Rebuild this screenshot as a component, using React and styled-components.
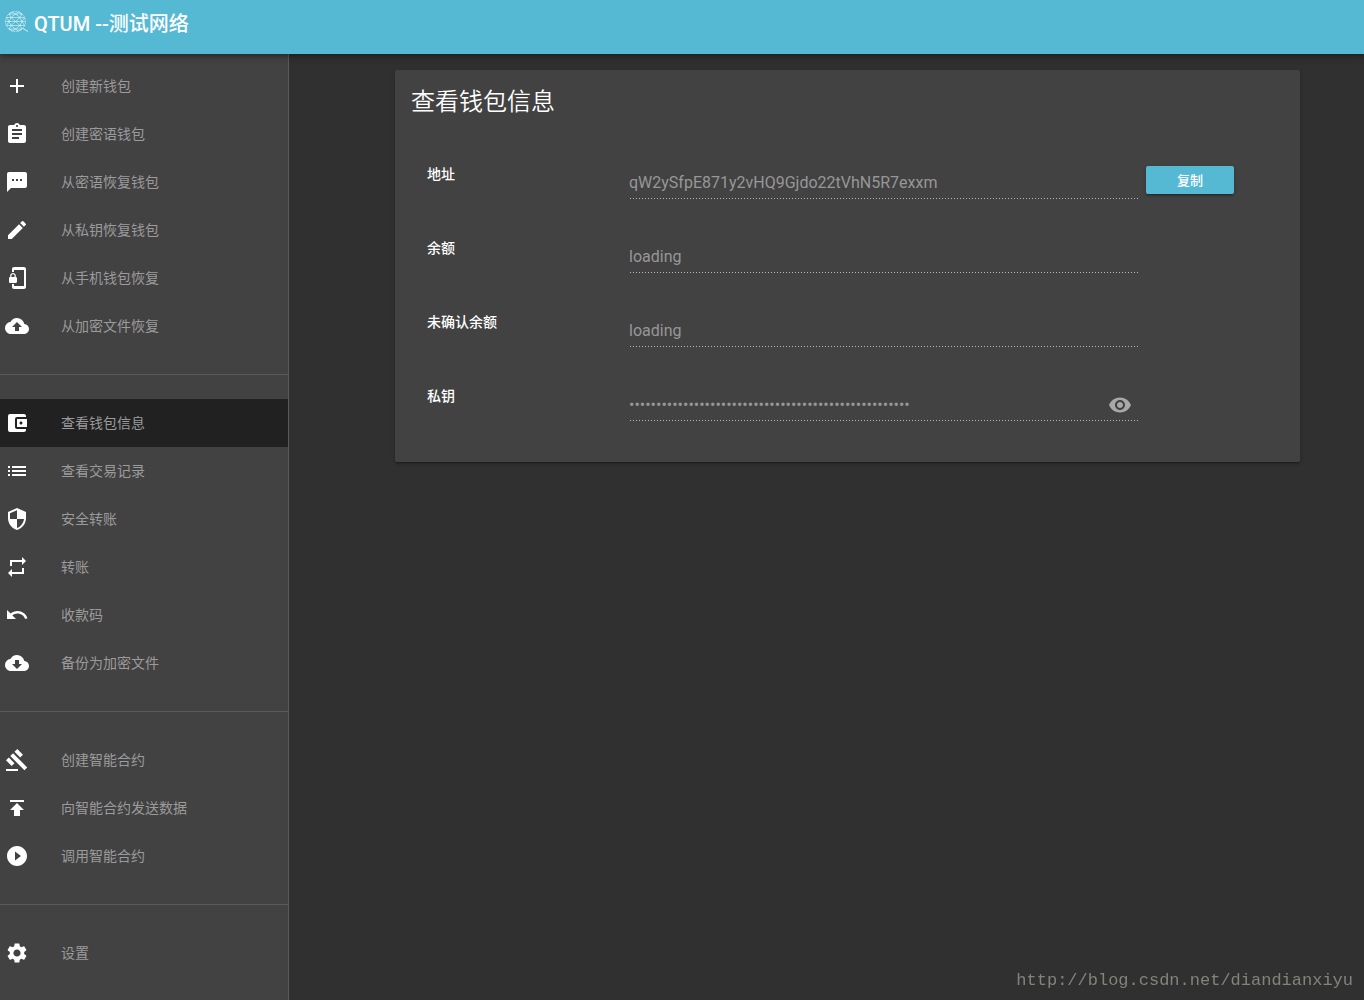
import { useState } from 'react';
import styled, { createGlobalStyle } from 'styled-components';
import {
  MdAdd, MdAssignment, MdTextsms, MdEdit, MdPhonelinkLock, MdBackup,
  MdAccountBalanceWallet, MdList, MdSecurity, MdRepeat, MdUndo, MdCloudDownload,
  MdGavel, MdPublish, MdPlayCircleFilled, MdSettings, MdVisibility, MdVisibilityOff,
} from 'react-icons/md';

const GlobalStyle = createGlobalStyle`
  *, *::before, *::after { box-sizing: border-box; }
  body {
    margin: 0;
    background: #303030;
    color: #fff;
    font-family: Roboto, 'Noto Sans CJK SC', sans-serif;
    font-size: 14px;
  }
`;

const Page = styled.div`
  display: flex;
  flex-direction: column;
  min-height: 100vh;
`;

const Header = styled.header`
  position: relative;
  z-index: 1;
  display: flex;
  align-items: flex-start;
  gap: 5px;
  height: 54px;
  padding: 10px 4px;
  background: #55b9d3;
  box-shadow: 0 2px 4px -1px rgba(0, 0, 0, 0.2), 0 4px 5px rgba(0, 0, 0, 0.14), 0 1px 10px rgba(0, 0, 0, 0.12);
`;

const Title = styled.h1`
  margin: 0;
  font-size: 20px;
  font-weight: 500;
  line-height: 28px;
`;

const Body = styled.div`
  display: flex;
  flex: 1;
`;

const Sidebar = styled.nav`
  flex: 0 0 289px;
  padding: 8px 0 0;
  background: #424242;
  border-right: 1px solid #5a5a5a;
`;

const Divider = styled.hr`
  height: 1px;
  margin: 24px 0;
  border: 0;
  background: #5a5a5a;
`;

const NavItem = styled.button`
  display: flex;
  align-items: center;
  gap: 32px;
  width: 100%;
  height: 48px;
  padding: 0 5px;
  border: 0;
  background: ${({ $active }) => ($active ? '#212121' : 'transparent')};
  color: #9b9b9b;
  font: inherit;
  text-align: left;
  cursor: pointer;

  svg {
    flex: none;
    color: #fff;
    font-size: 24px;
  }
`;

const NavText = styled.span`
  padding-bottom: 2px;
`;

const Main = styled.main`
  flex: 1;
  padding: 16px 64px 16px 106px;
`;

const Card = styled.section`
  padding: 16px;
  border-radius: 2px;
  background: #424242;
  box-shadow: 0 3px 1px -2px rgba(0, 0, 0, 0.2), 0 2px 2px rgba(0, 0, 0, 0.14), 0 1px 5px rgba(0, 0, 0, 0.12);
`;

const CardTitle = styled.h2`
  margin: 0 0 32px;
  font-size: 24px;
  font-weight: 350;
  line-height: 32px;
`;

const Field = styled.div`
  display: grid;
  grid-template-columns: 202px minmax(0, 1fr) 146px;
  height: 74px;
  padding: 0 0 0 16px;
`;

const Label = styled.label`
  padding-top: 14px;
  font-weight: 500;
  line-height: 20px;
`;

const InputLine = styled.div`
  display: flex;
  align-items: center;
  height: 32px;
  margin: 17px 0 0;
  padding-bottom: 1px;
  background: repeating-linear-gradient(to right, transparent 0 1px, #b8b8b8 1px 2px, transparent 2px 3px) bottom / 100% 1px no-repeat;
`;

const Input = styled.input`
  flex: 1;
  min-width: 0;
  padding: 0;
  border: 0;
  outline: 0;
  background: transparent;
  color: #979797;
  font: inherit;
  font-size: 16px;
  line-height: 24px;
`;

const EyeButton = styled.button`
  display: flex;
  margin-right: 6px;
  padding: 0;
  border: 0;
  background: none;
  color: #a8a8a8;
  font-size: 24px;
  cursor: pointer;
`;

const CopyButton = styled.button`
  width: 88px;
  height: 28px;
  margin: 16px 8px 0;
  padding: 0 0 2px;
  border: 0;
  border-radius: 2px;
  background: #55b9d3;
  color: #fff;
  font: inherit;
  font-size: 13px;
  font-weight: 500;
  box-shadow: 0 3px 1px -2px rgba(0, 0, 0, 0.2), 0 2px 2px rgba(0, 0, 0, 0.14), 0 1px 5px rgba(0, 0, 0, 0.12);
  cursor: pointer;
`;

const Watermark = styled.div`
  position: fixed;
  right: 11px;
  bottom: 7px;
  color: #83837b;
  font-family: 'Liberation Mono', monospace;
  font-size: 17px;
  line-height: 24px;
`;

const groups = [
  [
    { icon: MdAdd, text: '创建新钱包' },
    { icon: MdAssignment, text: '创建密语钱包' },
    { icon: MdTextsms, text: '从密语恢复钱包' },
    { icon: MdEdit, text: '从私钥恢复钱包' },
    { icon: MdPhonelinkLock, text: '从手机钱包恢复' },
    { icon: MdBackup, text: '从加密文件恢复' },
  ],
  [
    { icon: MdAccountBalanceWallet, text: '查看钱包信息' },
    { icon: MdList, text: '查看交易记录' },
    { icon: MdSecurity, text: '安全转账' },
    { icon: MdRepeat, text: '转账' },
    { icon: MdUndo, text: '收款码' },
    { icon: MdCloudDownload, text: '备份为加密文件' },
  ],
  [
    { icon: MdGavel, text: '创建智能合约' },
    { icon: MdPublish, text: '向智能合约发送数据' },
    { icon: MdPlayCircleFilled, text: '调用智能合约' },
  ],
  [{ icon: MdSettings, text: '设置' }],
];

const Logo = () => (
  <svg width="25" height="24" viewBox="0 0 25 24" fill="none" stroke="#e6f6fa" strokeWidth="0.6" aria-hidden="true">
    <circle cx="11.5" cy="11.5" r="10" strokeDasharray="2.4 0.7" />
    {/* paralelos */}
    <path d="M5 4 H18 M2.5 7.5 H20.5 M1.5 11.5 H21.5 M2.5 15.5 H20.5 M5 19 H18" />
    {/* malla de triángulos */}
    <path d="M8.5 2 L5 4 L7 7.5 L11.5 4 L16 7.5 L18 4 L14.5 2 L11.5 4 Z" />
    <path d="M2.5 7.5 L5 11.5 L7 7.5 L11.5 11.5 L16 7.5 L18 11.5 L20.5 7.5" />
    <path d="M2.5 15.5 L5 11.5 L7 15.5 L11.5 11.5 L16 15.5 L18 11.5 L20.5 15.5" />
    <path d="M8.5 21 L5 19 L7 15.5 L11.5 19 L16 15.5 L18 19 L14.5 21 L11.5 19 Z" />
    <path d="M19 18.5 L24 21.5" strokeWidth="0.9" />
  </svg>
);

// Fila con etiqueta, valor y una acción opcional
const InfoField = ({ id, label, value, type = 'text', children, action }) => (
  <Field>
    <Label htmlFor={id}>{label}</Label>
    <InputLine>
      <Input id={id} type={type} value={value} readOnly />
      {children}
    </InputLine>
    {action}
  </Field>
);

const App = () => {
  const [active, setActive] = useState('查看钱包信息');
  const [showKey, setShowKey] = useState(false);
  const address = 'qW2ySfpE871y2vHQ9Gjdo22tVhN5R7exxm';

  return (
    <Page>
      <GlobalStyle />
      <Header>
        <Logo />
        <Title>QTUM --测试网络</Title>
      </Header>

      <Body>
        <Sidebar>
          {groups.map((items, i) => (
            <div key={items[0].text}>
              {i > 0 && <Divider />}
              {items.map(({ icon: Icon, text }) => (
                <NavItem key={text} $active={active === text} onClick={() => setActive(text)}>
                  <Icon />
                  <NavText>{text}</NavText>
                </NavItem>
              ))}
            </div>
          ))}
        </Sidebar>

        <Main>
          <Card>
            <CardTitle>查看钱包信息</CardTitle>
            <InfoField
              id="address"
              label="地址"
              value={address}
              action={<CopyButton onClick={() => navigator.clipboard?.writeText(address)}>复制</CopyButton>}
            />
            <InfoField id="balance" label="余额" value="loading" />
            <InfoField id="unconfirmed" label="未确认余额" value="loading" />
            <InfoField id="key" label="私钥" type={showKey ? 'text' : 'password'} value={'x'.repeat(52)}>
              <EyeButton aria-label="私钥" onClick={() => setShowKey(!showKey)}>
                {showKey ? <MdVisibilityOff /> : <MdVisibility />}
              </EyeButton>
            </InfoField>
          </Card>
        </Main>
      </Body>

      <Watermark>http://blog.csdn.net/diandianxiyu</Watermark>
    </Page>
  );
};

export default App;
